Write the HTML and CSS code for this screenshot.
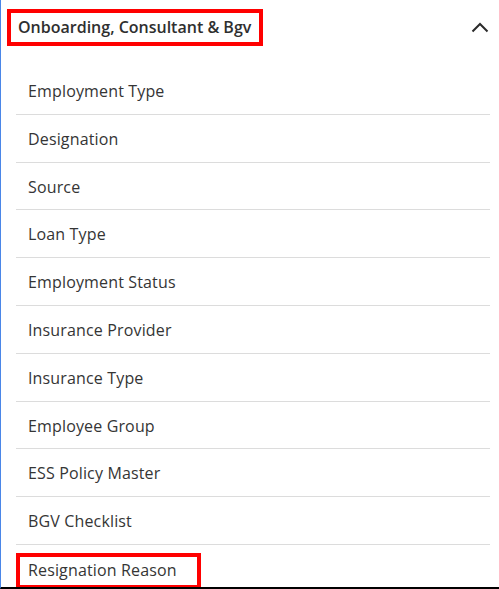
FILE: index.html
```html
<!DOCTYPE html>
<html>
<head>
<meta charset="utf-8">
<link rel="stylesheet" href="styles.css">
</head>
<body>
<div class="panel">
  <div class="panel-header">
    <span class="title highlight">Onboarding, Consultant &amp; Bgv</span>
    <svg class="chevron" width="18" height="11" viewBox="0 0 18 11"><path d="M1.5 9.5 L9 2 L16.5 9.5" fill="none" stroke="#2b2b2b" stroke-width="2"/></svg>
  </div>
  <ul class="items">
    <li class="item">Employment Type</li>
    <li class="item">Designation</li>
    <li class="item">Source</li>
    <li class="item">Loan Type</li>
    <li class="item">Employment Status</li>
    <li class="item">Insurance Provider</li>
    <li class="item">Insurance Type</li>
    <li class="item">Employee Group</li>
    <li class="item">ESS Policy Master</li>
    <li class="item">BGV Checklist</li>
    <li class="item item-marked"><span class="highlight mark">Resignation Reason</span></li>
  </ul>
</div>
</body>
</html>
```
FILE: styles.css
```css
* { box-sizing: border-box; }
html, body { margin: 0; padding: 0; background: #fff; }
body {
  font-family: "Open Sans", Lato, "Liberation Sans", sans-serif;
  color: #333;
  width: 499px;
  height: 589px;
  overflow: hidden;
}
.panel {
  height: 589px;
  border-left: 1px solid #4a86e8;
  border-bottom: 2px solid #000;
  overflow: hidden;
}
.panel-header {
  height: 67px;
  display: flex;
  align-items: flex-start;
  justify-content: space-between;
  padding: 9px 10px 0 6px;
}
.highlight {
  border: 4px solid #f00;
}
.title {
  display: inline-block;
  height: 37px;
  line-height: 28px;
  padding: 0 8px 0 7px;
  font-size: 16px;
  font-weight: 600;
  color: #2f2f2f;
}
.chevron { margin-top: 13px; }
.items {
  list-style: none;
  margin: 0 9px 0 15px;
  padding: 0;
}
.item {
  height: 47.8px;
  line-height: 47px;
  padding-top: 1px;
  border-bottom: 1px solid #dcdcdc;
  padding-left: 12px;
  font-size: 16px;
  letter-spacing: 0.15px;
  color: #353535;
}
.item-marked { padding-left: 0; padding-top: 0; border-bottom: none; }
.mark {
  display: inline-block;
  height: 36px;
  line-height: 27px;
  padding: 0 20px 0 8px;
  margin-top: 8px;
}
```
